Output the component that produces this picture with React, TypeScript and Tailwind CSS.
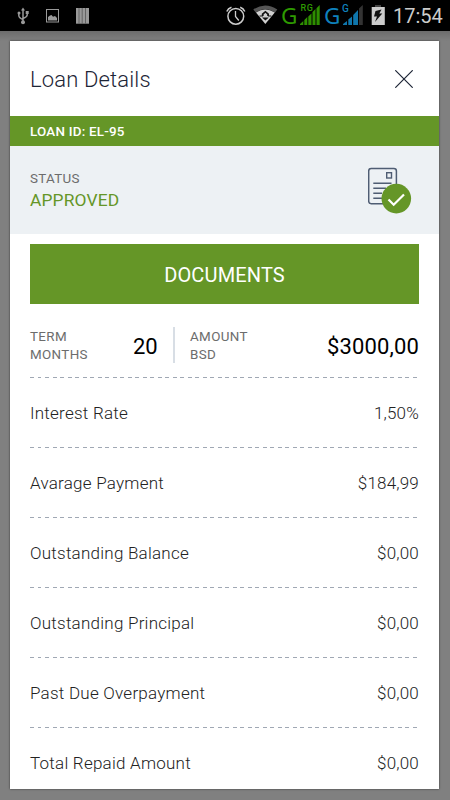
import React from "react";

function UsbIcon() {
  return (
    <svg className="ml-[17px] h-[31px] w-3 shrink-0" viewBox="17 0 12 31" fill="none" stroke="#999" strokeWidth="1.5">
      <path d="M23 9.500V22M18.800 13.500V15.500Q19 18 23 19.500M27.200 12.500V15Q27 17 23 18.500" />
      <path d="M23 7.500L25 10.500H21Z" fill="#999" stroke="none" />
      <circle cx="23" cy="22.200" r="2" fill="#999" stroke="none" />
      <circle cx="19" cy="13" r="1.500" fill="#999" stroke="none" />
      <rect x="25.700" y="11" width="3" height="3" fill="#999" stroke="none" />
    </svg>
  );
}

function PictureIcon() {
  return (
    <svg className="ml-[17px] h-[31px] w-[13px] shrink-0" viewBox="46 0 13 31">
      <rect x="46.500" y="9.500" width="12" height="12.500" fill="none" stroke="#999" />
      <path d="M48 20.500V17L50 15.500L51.500 15L53 16.800L55 16L57 18V20.500Z" fill="#999" />
    </svg>
  );
}

function BarsIcon() {
  return (
    <svg className="ml-[17px] h-[31px] w-[13px] shrink-0" viewBox="76 0 13 31">
      <rect x="76" y="8" width="13" height="15.700" fill="#999" />
      <path d="M79 8V23.700M82.200 8V23.700M85.500 8V23.700" stroke="#555" strokeWidth="0.800" />
    </svg>
  );
}

function AlarmIcon() {
  return (
    <svg className="ml-auto h-[31px] w-5 shrink-0" viewBox="225 0 20 31" fill="none" stroke="#ccc" strokeWidth="1.500">
      <circle cx="234.800" cy="16.300" r="7.900" />
      <path d="M234.500 11V16.500L237.800 20.500" strokeWidth="1.300" />
      <path d="M225.800 11.500Q227 8.500 230.500 7.300M239.200 7.300Q242.500 8.500 243.800 11.500" />
    </svg>
  );
}

function WifiIcon() {
  return (
    <svg className="ml-[7px] h-[31px] w-[25px] shrink-0" viewBox="252 0 25 31">
      <path d="M252.300 9.500Q264 1.500 276.300 9.500L274 12.500Q264 6 254.800 12.500Z" fill="#555" />
      <path d="M255 12.500Q264 6.500 273.800 12.500L264.300 24Z" fill="#d0d0d0" />
      <path d="M260.800 16V13.800L264.400 10.800L268 13.800V16M261 17.500H267.800L264.400 20.500Z" fill="#111" />
      <path d="M262.600 14.500L264.400 12.800L266.200 14.500V16.500H262.600Z" fill="#d0d0d0" />
      <path d="M258.500 16H262M267 16H270.300" stroke="#111" strokeWidth="1.200" />
    </svg>
  );
}

function GreenSignal() {
  return (
    <div className="relative ml-[2px] h-[31px] w-5 shrink-0">
      <svg className="h-[31px] w-5" viewBox="300 0 20 31">
        <path d="M300 25V24L303.300 21V25ZM304.300 25V20L307.300 17V25ZM308.300 25V16.500L311.500 13.500V25ZM312.500 25V12L315.500 9V25ZM316.500 25V8.300L319.700 5V25Z" fill="#2e8f00" />
      </svg>
      <span className="absolute top-[3px] left-[0.500px] text-[9px] leading-[10px] font-medium tracking-[0.600px] text-[#2e9a00]">RG</span>
    </div>
  );
}

function BlueSignal() {
  return (
    <div className="relative ml-px h-[31px] w-[21px] shrink-0">
      <svg className="h-[31px] w-[21px]" viewBox="342 0 21 31">
        <path d="M343 25V24L347 21V25ZM348.300 25V19.500L352 16.500V25ZM353.200 25V15L358 10V25Z" fill="#0f76ac" />
        <path d="M359 25V8.500L362.800 5V25Z" fill="#333" />
      </svg>
      <span className="absolute top-[4px] left-0 text-[10px] leading-[10px] font-medium text-[#0f82bd]">G</span>
    </div>
  );
}

function BatteryIcon() {
  return (
    <svg className="ml-[8px] h-[31px] w-[14px] shrink-0" viewBox="371 0 14 31">
      <path d="M375 5H381V7H375Z" fill="#444" />
      <path d="M371.700 7H384.800V25H371.700Z" fill="#ccc" />
      <path d="M375.500 11L381.500 9.500L379.300 13.500H382.300L375 22L377 16.500H374Z" fill="#111" />
    </svg>
  );
}

function StatusBar() {
  return (
    <header className="flex h-[31px] shrink-0 items-center bg-black">
      <UsbIcon />
      <PictureIcon />
      <BarsIcon />
      <AlarmIcon />
      <WifiIcon />
      <span className="ml-[3px] w-[17px] shrink-0 font-['Noto_Sans',sans-serif] text-[22.500px] leading-[31px] text-[#2e9a00]">G</span>
      <GreenSignal />
      <span className="ml-[4px] w-[17px] shrink-0 font-['Noto_Sans',sans-serif] text-[22.500px] leading-[31px] text-[#0f82bd]">G</span>
      <BlueSignal />
      <BatteryIcon />
      <span className="mr-[8px] ml-[8px] w-[49px] shrink-0 pt-[2px] text-[20px] leading-[31px] text-[#ccc]">17:54</span>
    </header>
  );
}

function CloseIcon() {
  return (
    <svg className="h-[18px] w-[18px]" viewBox="0 0 18 18" stroke="#1d2536" strokeWidth="1.200">
      <path d="M0.300 0.300L17.700 17.700M17.700 0.300L0.300 17.700" />
    </svg>
  );
}

function ApprovedDocumentIcon() {
  return (
    <svg className="h-[47px] w-11" viewBox="368 167 44 47" fill="none" stroke="#4f5d73">
      <rect x="368.700" y="168.500" width="27.700" height="35.300" rx="2.500" strokeWidth="1.500" />
      <rect x="386.700" y="172.700" width="4.800" height="5.300" strokeWidth="1.400" />
      <path d="M373.300 183.200H391.500M373.300 188.200H386M373.300 193.200H382M373.300 198.200H382" strokeWidth="1.400" />
      <circle cx="396.300" cy="198.600" r="14.800" fill="#659627" stroke="none" />
      <path d="M388.500 199.500L393.700 204.800L404 194.500" stroke="#fff" strokeWidth="2.200" />
    </svg>
  );
}

function DashedRule() {
  return (
    <div className="mx-5 h-px shrink-0 bg-[repeating-linear-gradient(90deg,#a0a8b4_0px,#a0a8b4_4px,transparent_4px,transparent_7.500px)]" />
  );
}

const details = [
  { label: "Interest Rate", value: "1,50%" },
  { label: "Avarage Payment", value: "$184,99" },
  { label: "Outstanding Balance", value: "$0,00" },
  { label: "Outstanding Principal", value: "$0,00" },
  { label: "Past Due Overpayment", value: "$0,00" },
  { label: "Total Repaid Amount", value: "$0,00" },
];

export default function App() {
  return (
    <div className="flex h-[800px] w-[450px] flex-col overflow-hidden bg-[#808080] font-[Roboto,sans-serif]">
      <StatusBar />
      <div className="h-[10px] shrink-0 bg-linear-to-b from-[#6c6c6c] to-[#808080]" />
      <main className="ml-[10px] flex h-[748px] w-[429px] flex-col overflow-hidden bg-white shadow-[0_0_2px_#333]">
        <div className="flex h-[75px] shrink-0 items-center justify-between pr-[26px] pl-5">
          <h1 className="pt-[2px] text-[22px] font-light tracking-[0.150px] text-[#1d2536]">Loan Details</h1>
          <CloseIcon />
        </div>
        <div className="flex h-[30px] shrink-0 items-center bg-[#659627] pt-[2px] pl-5 text-[13.400px] font-medium tracking-[0.220px] text-white">
          LOAN ID: EL-95
        </div>
        <section className="flex h-[88px] shrink-0 justify-between bg-[#edf1f4] pr-[27px] pl-5">
          <div className="pt-[23px]">
            <div className="text-[13.400px] leading-[20px] tracking-[0.300px] text-[#6c6c6c]">STATUS</div>
            <div className="text-[17.400px] leading-[22px] tracking-[0.150px] text-[#659627]">APPROVED</div>
          </div>
          <div className="pt-[21px]">
            <ApprovedDocumentIcon />
          </div>
        </section>
        <button className="mx-5 mt-[10px] h-[60px] w-[389px] shrink-0 bg-[#659627] pt-px text-[20px] tracking-[0.150px] text-white">DOCUMENTS</button>
        <section className="mx-5 flex h-[73px] shrink-0 items-center pt-[9px]">
          <div className="w-[103px] pt-px text-[13.400px] leading-[18px] tracking-[0.350px] text-[#6c6c6c]">TERM<br />MONTHS</div>
          <div className="w-10 pt-[3px] text-[22px] text-black">20</div>
          <div className="h-9 w-[2px] bg-[#d8dee5]" />
          <div className="ml-[15px] pt-px text-[13.400px] leading-[18px] tracking-[0.350px] text-[#6c6c6c]">AMOUNT<br />BSD</div>
          <div className="ml-auto pt-[3px] text-[22px] tracking-[0.150px] text-black">$3000,00</div>
        </section>
        {details.map((row) => (
          <React.Fragment key={row.label}>
            <DashedRule />
            <div className="mx-5 flex h-[69px] shrink-0 items-center justify-between pt-[2px] text-[17px] font-light text-[#222]">
              <span className="tracking-[0.240px]">{row.label}</span>
              <span className="tracking-[0.200px]">{row.value}</span>
            </div>
          </React.Fragment>
        ))}
      </main>
    </div>
  );
}
